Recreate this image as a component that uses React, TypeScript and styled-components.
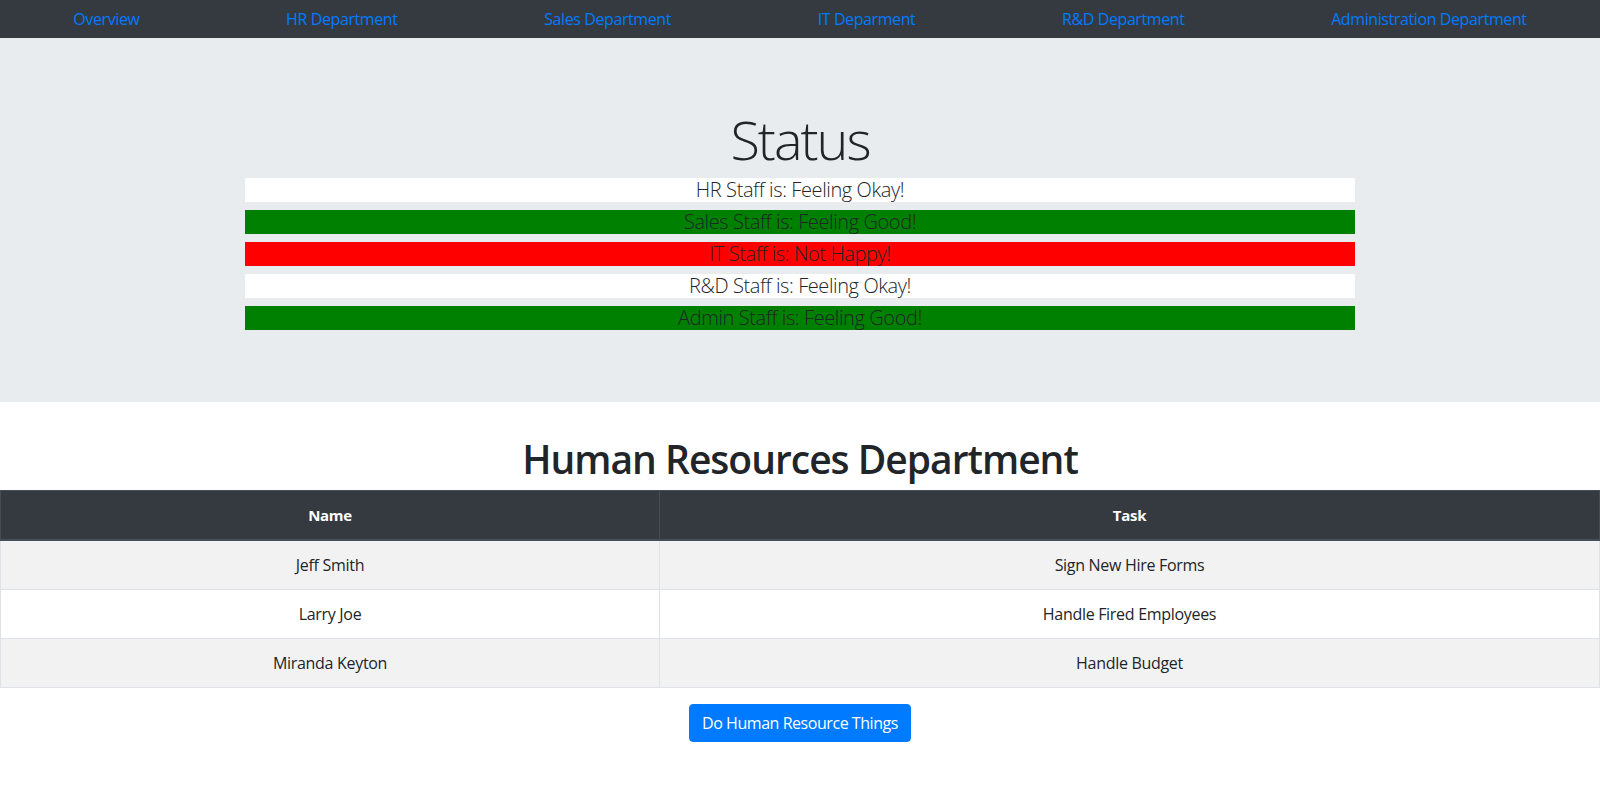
import React from "react";
import styled, { createGlobalStyle } from "styled-components";

const GlobalStyle = createGlobalStyle`
  html, body {
    margin: 0;
    padding: 0;
    background: #ffffff;
  }
  body {
    font-family: "Open Sans", "Noto Sans", "Liberation Sans", sans-serif;
    font-size: 16px;
    line-height: 1.5;
    color: #212529;
  }
  * { box-sizing: border-box; }
`;

const Navbar = styled.nav`
  display: flex;
  justify-content: space-around;
  align-items: center;
  height: 38px;
  background: #343a40;
`;

const NavLink = styled.a`
  color: #007bff;
  text-decoration: none;
  font-size: 16px;
  letter-spacing: -0.4px;
  cursor: pointer;
`;

const Jumbotron = styled.section`
  background: #e9ecef;
  padding: 64px 32px;
  margin-bottom: 32px;
`;

const Container = styled.div`
  width: 1140px;
  margin: 0 auto;
  padding: 0 15px;
`;

const DisplayTitle = styled.h1`
  margin: 0 0 5px;
  padding-top: 4px;
  font-size: 54px;
  font-weight: 300;
  line-height: 67px;
  text-align: center;
  letter-spacing: -2px;
`;

const StatusBar = styled.div<{ $tone: string }>`
  display: flex;
  align-items: center;
  justify-content: center;
  height: 24px;
  margin-bottom: 8px;
  background: ${(p) => p.$tone};
  font-size: 20px;
  line-height: 24px;
  font-weight: 300;
  letter-spacing: -0.4px;
  color: #212529;
`;

const DeptTitle = styled.h1`
  margin: 0 0 8px;
  padding-top: 1px;
  font-size: 39px;
  font-weight: 600;
  line-height: 47px;
  text-align: center;
  letter-spacing: -1px;
`;

const Table = styled.table`
  width: 100%;
  border-collapse: collapse;
  margin-bottom: 16px;
  border: 1px solid #dee2e6;
`;

const HeadCell = styled.th<{ $w?: string }>`
  width: ${(p) => p.$w || "auto"};
  background: #343a40;
  color: #ffffff;
  font-weight: 700;
  padding: 12px;
  line-height: 24px;
  font-size: 15px;
  letter-spacing: -0.3px;
  text-align: center;
  border: 1px solid #454d55;
  border-bottom-width: 2px;
`;

const Row = styled.tr<{ $striped: boolean }>`
  background: ${(p) => (p.$striped ? "#f2f2f2" : "#ffffff")};
`;

const Cell = styled.td`
  padding: 12px;
  line-height: 24px;
  font-size: 16px;
  letter-spacing: -0.3px;
  text-align: center;
  border: 1px solid #dee2e6;
`;

const ButtonRow = styled.div`
  display: flex;
  justify-content: center;
`;

const Button = styled.button`
  font-family: inherit;
  font-size: 16px;
  letter-spacing: -0.45px;
  line-height: 24px;
  padding: 6px 12px;
  color: #ffffff;
  background: #007bff;
  border: 1px solid #007bff;
  border-radius: 4px;
  cursor: pointer;
`;

const links = [
  "Overview",
  "HR Department",
  "Sales Department",
  "IT Deparment",
  "R&D Department",
  "Administration Department",
];

const statuses = [
  { text: "HR Staff is: Feeling Okay!", tone: "#ffffff" },
  { text: "Sales Staff is: Feeling Good!", tone: "#008000" },
  { text: "IT Staff is: Not Happy!", tone: "#ff0000" },
  { text: "R&D Staff is: Feeling Okay!", tone: "#ffffff" },
  { text: "Admin Staff is: Feeling Good!", tone: "#008000" },
];

const staff = [
  { name: "Jeff Smith", task: "Sign New Hire Forms" },
  { name: "Larry Joe", task: "Handle Fired Employees" },
  { name: "Miranda Keyton", task: "Handle Budget" },
];

export default function App() {
  return (
    <>
      <GlobalStyle />
      <Navbar>
        {links.map((l) => (
          <NavLink key={l}>{l}</NavLink>
        ))}
      </Navbar>
      <Jumbotron>
        <Container>
          <DisplayTitle>Status</DisplayTitle>
          {statuses.map((s) => (
            <StatusBar key={s.text} $tone={s.tone}>
              {s.text}
            </StatusBar>
          ))}
        </Container>
      </Jumbotron>
      <DeptTitle>Human Resources Department</DeptTitle>
      <Table>
        <thead>
          <tr>
            <HeadCell $w="659px">Name</HeadCell>
            <HeadCell>Task</HeadCell>
          </tr>
        </thead>
        <tbody>
          {staff.map((s, i) => (
            <Row key={s.name} $striped={i % 2 === 0}>
              <Cell>{s.name}</Cell>
              <Cell>{s.task}</Cell>
            </Row>
          ))}
        </tbody>
      </Table>
      <ButtonRow>
        <Button>Do Human Resource Things</Button>
      </ButtonRow>
    </>
  );
}
